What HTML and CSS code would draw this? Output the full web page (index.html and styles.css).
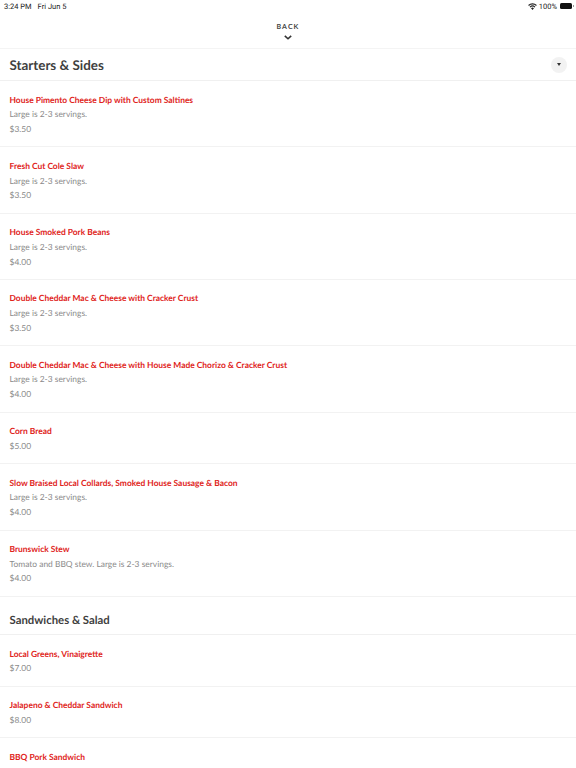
FILE: index.html
```html
<!DOCTYPE html>
<html lang="en">
<head>
<meta charset="UTF-8">
<title>Menu</title>
<link rel="stylesheet" href="styles.css">
</head>
<body>

<div class="status">
  <span class="status-left"><span>3:24 PM</span><span>Fri Jun 5</span></span>
  <span class="status-right">
    <svg class="wifi" viewBox="0 0 16 12" width="9" height="7"><path d="M8 12 5.4 9a3.6 3.6 0 0 1 5.2 0zM4.2 7.8 2.9 6.3a7.4 7.4 0 0 1 10.2 0L11.8 7.8a5.4 5.4 0 0 0-7.6 0zM1.7 5.1.3 3.5a11.2 11.2 0 0 1 15.4 0L14.3 5.100a9.2 9.2 0 0 0-12.6 0z"/></svg>
    <span>100%</span>
    <span class="battery"></span>
  </span>
</div>

<div class="back">
  <span class="back-label">BACK</span>
  <svg class="chevron" viewBox="0 0 10 6" width="8" height="5"><path d="M1 1l4 3.6L9 1" fill="none" stroke="#333" stroke-width="2"/></svg>
</div>

<section class="section">
  <div class="section-head">
    <h2>Starters &amp; Sides</h2>
    <span class="toggle"><span class="caret"></span></span>
  </div>
  <div class="item">
    <h3>House Pimento Cheese Dip with Custom Saltines</h3>
    <p>Large is 2-3 servings.</p>
    <p>$3.50</p>
  </div>
  <div class="item">
    <h3>Fresh Cut Cole Slaw</h3>
    <p>Large is 2-3 servings.</p>
    <p>$3.50</p>
  </div>
  <div class="item">
    <h3>House Smoked Pork Beans</h3>
    <p>Large is 2-3 servings.</p>
    <p>$4.00</p>
  </div>
  <div class="item">
    <h3>Double Cheddar Mac &amp; Cheese with Cracker Crust</h3>
    <p>Large is 2-3 servings.</p>
    <p>$3.50</p>
  </div>
  <div class="item">
    <h3>Double Cheddar Mac &amp; Cheese with House Made Chorizo &amp; Cracker Crust</h3>
    <p>Large is 2-3 servings.</p>
    <p>$4.00</p>
  </div>
  <div class="item">
    <h3>Corn Bread</h3>
    <p>$5.00</p>
  </div>
  <div class="item">
    <h3>Slow Braised Local Collards, Smoked House Sausage &amp; Bacon</h3>
    <p>Large is 2-3 servings.</p>
    <p>$4.00</p>
  </div>
  <div class="item">
    <h3>Brunswick Stew</h3>
    <p>Tomato and BBQ stew. Large is 2-3 servings.</p>
    <p>$4.00</p>
  </div>
</section>

<section class="section section-small">
  <div class="section-head">
    <h2>Sandwiches &amp; Salad</h2>
  </div>
  <div class="item">
    <h3>Local Greens, Vinaigrette</h3>
    <p>$7.00</p>
  </div>
  <div class="item">
    <h3>Jalapeno &amp; Cheddar Sandwich</h3>
    <p>$8.00</p>
  </div>
  <div class="item">
    <h3>BBQ Pork Sandwich</h3>
    <p>$8.00</p>
  </div>
</section>

</body>
</html>
```

FILE: styles.css
```css
*{box-sizing:border-box}
html,body{height:768px;overflow:hidden}
body{margin:0;background:#fff;font-family:Lato,sans-serif;color:#333;text-rendering:geometricPrecision}

.status{
  display:flex;justify-content:space-between;align-items:center;
  height:12px;padding:0 4px;
  font-family:Roboto,sans-serif;font-size:7.5px;color:#222}
.status-left{display:flex;gap:6px}
.status-right{display:flex;align-items:center;gap:2px}
.wifi{display:block;fill:#222}
.battery{position:relative;display:block;width:12px;height:6px;margin-left:1px;border-radius:1.5px;background:#111}
.battery::after{content:"";position:absolute;right:-1.5px;top:2px;width:1px;height:2px;background:#999}

.back{
  display:flex;flex-direction:column;align-items:center;
  height:37px;padding-top:11px;border-bottom:1px solid #f4f4f4}
.back-label{font-size:7px;font-weight:700;letter-spacing:1.1px;line-height:9px;color:#444}
.chevron{display:block;margin-top:3px}

.section-head{
  display:flex;justify-content:space-between;align-items:center;
  height:32px;padding:0 9.5px;border-bottom:1px solid #f0f0f0}
.section-head h2{margin:0;font-size:13.4px;font-weight:700;color:#3f3f3f}
.section-small .section-head{height:38.4px;padding-top:10px}
.section-small .section-head h2{font-size:11.35px}
.toggle{display:flex;align-items:center;justify-content:center;width:16px;height:16px;border-radius:50%;background:#f2f2f2}
.caret{width:0;height:0;border:2px solid transparent;border-top:3px solid #333;border-bottom:0}

.item{padding:12.5px 9.5px 11.45px;border-bottom:1px solid #f2f2f2}
.item h3{margin:0;font-size:8.44px;line-height:12px;font-weight:700;color:#e0241b}
.item p{margin:2.7px 0 0;font-size:8.44px;line-height:12px;color:#8a8a8a}
```
